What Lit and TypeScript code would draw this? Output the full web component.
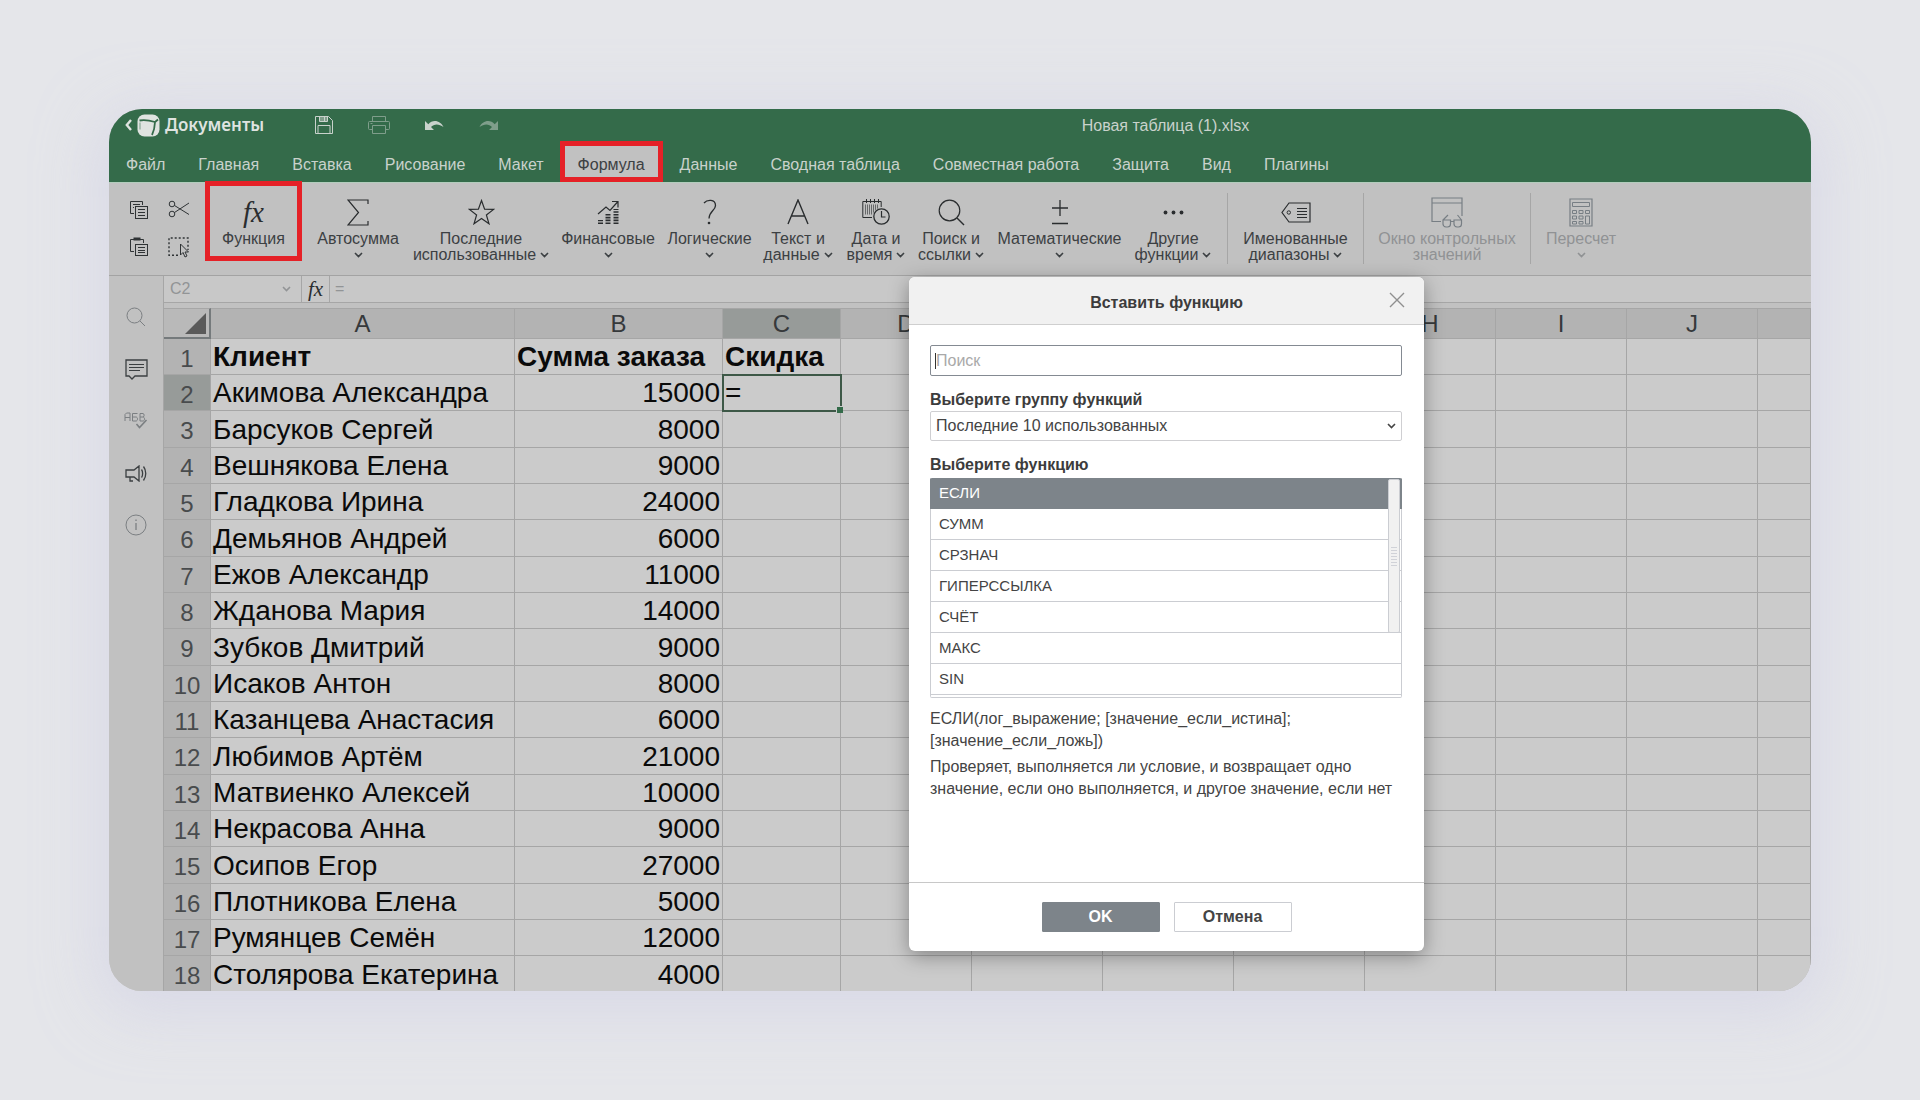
import { LitElement, html, css, svg, nothing } from "lit";
import { customElement } from "lit/decorators.js";
import { classMap } from "lit/directives/class-map.js";

const icon = (w: number, h: number, body: unknown) =>
  html`<svg width=${w} height=${h} viewBox="0 0 ${w} ${h}" fill="none" stroke="currentColor" aria-hidden="true">${body}</svg>`;

const chevron = html`<svg class="chev" width="9" height="6" viewBox="0 0 9 6" fill="none" stroke="currentColor" stroke-width="1.6" aria-hidden="true"><path d="M1 1l3.5 3.5L8 1"/></svg>`;

const icons = {
  back: icon(7, 12, svg`<path stroke-width="2.4" d="M6 1L1.8 6 6 11"/>`),
  logo: icon(23, 23, svg`<rect x=".5" y=".5" width="22" height="22" rx="7" fill="#dfe3e0" stroke="none"/><path stroke="#346b4a" stroke-width="1.800" stroke-linejoin="round" d="M2.500 6.500c5-1.200 10-.2 15.500 1.500-.2 5-1 9-3 13M18 8l3-2.500"/><path stroke="#346b4a" stroke-width="1.200" opacity=".5" d="M3 8.500v7"/>`),
  save: icon(18, 18, svg`<path d="M.5.5h13l4 4v13H.5z"/><path d="M4.500.5v5h8v-5zM9.500 1v4" fill="currentColor" fill-opacity=".5"/><path d="M3 17.500v-8h12v8"/>`),
  print: icon(22, 18, svg`<path d="M4.500 5V.5h13V5M4.500 13.500h-3a1 1 0 0 1-1-1V6.500a1 1 0 0 1 1-1h19a1 1 0 0 1 1 1v6a1 1 0 0 1-1 1h-3M4.500 9.500h13v8h-13zM2.500 7.500h2"/>`),
  undo: icon(19, 11, svg`<path stroke="none" fill="currentColor" d="M0 1v9h9L6 7c3-3.500 8-3.500 12.500 0C16 1 8-1.500 3.300 4.300z"/>`),
  redo: icon(19, 11, svg`<path stroke="none" fill="currentColor" d="M19 1v9h-9l3-3C10 3.500 5 3.500.5 7 3 1 11-1.500 15.700 4.300z"/>`),
  copy: icon(20, 19, svg`<path d="M5 13.500H1.500v-12h12V5M4 4.500h7M4 7.500h1"/><rect x="6.500" y="6.500" width="12" height="12"/><path d="M9 9.500h7M9 12.500h7M9 15.500h7"/>`),
  cut: icon(22, 18, svg`<circle cx="4" cy="4" r="2.800"/><circle cx="4" cy="14" r="2.800"/><path d="M6.500 5.500L21 14.500M6.500 12.500L21 3"/>`),
  paste: icon(20, 20, svg`<path d="M5 14.500H1.500v-12h13V6"/><path stroke-width="3" d="M4.500 2h7"/><rect x="6.500" y="7.500" width="12" height="11"/><path d="M9 10.500h7M9 13.500h7M9 15.500h7"/>`),
  select: icon(22, 21, svg`<path stroke-width="1.400" stroke-dasharray="2 2" d="M10 18.300H1V1h19v12"/><path d="M12.500 7v11l2.500-2.500 2 4.500 2-1-2-4h3.500z"/>`),
  sum: icon(22, 27, svg`<path stroke-width="1.200" d="M21 5V1H1l10.500 12.500L1 26h20v-4"/>`),
  star: icon(27, 27, svg`<path stroke-width="1.200" d="M13.500 1.500l3.100 8.600 9 .3-7.200 5.500 2.600 8.900-7.500-5.200L6 24.800l2.600-8.900L1.400 10.400l9-.3z"/>`),
  finance: icon(22, 25, svg`<path stroke-width="1.200" d="M1 14l8-7 4 3.500L20.500 2M15 1.500h6v6"/><path stroke-width="5" stroke-dasharray="1.600 1.200" d="M3.500 24v-4M11 24V13.500M19 24V9"/>`),
  logic: icon(14, 26, svg`<path stroke-width="1.300" d="M1 4C4 .5 12.500-.3 12.500 6.500c0 5-6.500 6-6.500 13"/><circle cx="6" cy="24" r="1.300" fill="currentColor" stroke="none"/>`),
  text: icon(22, 26, svg`<path stroke-width="1.400" d="M1 25L11 1l10 24M4.500 17h13"/>`),
  date: icon(28, 26, svg`<path d="M10 18.500H.8v-16h18.400V8M4.500 0v4M8.500 0v4M12.500 0v4M16.500 0v4"/><path stroke-width="10" stroke-dasharray="1 1" opacity=".6" d="M3 10.500h14"/><circle cx="19.500" cy="17.500" r="9" fill="#c1c1c1" stroke="none"/><circle cx="19.500" cy="17.500" r="7.700" stroke-width="1.300"/><path stroke-width="1.200" d="M19.500 12v6h4"/>`),
  search: icon(27, 27, svg`<circle cx="11.500" cy="11.500" r="10.300" stroke-width="1.200"/><path stroke-width="1.400" d="M19 19l7 7"/>`),
  math: icon(18, 26, svg`<path stroke-width="1.300" d="M9 1v16M1 9h16M1 24.500h16"/>`),
  more: icon(21, 5, svg`<g stroke="none" fill="currentColor"><circle cx="2.500" cy="2.500" r="1.900"/><circle cx="10.500" cy="2.500" r="1.900"/><circle cx="18.500" cy="2.500" r="1.900"/></g>`),
  names: icon(30, 21, svg`<path stroke-width="1.200" d="M8 1h21v19H8L1 10.500z"/><circle cx="7.800" cy="10.500" r="1.700"/><path d="M16 6.500h10M16 9.500h10M16 12.500h10M16 15.500h10"/>`),
  watch: icon(32, 31, svg`<path stroke-width="1.200" d="M10 24.500H1V1h30v18M1 6h30M12 23v4c0 1 1 3 3 3h1.500c2 0 3-1.500 3-3v-4zM23 23v4c0 1 1 3 3 3h1.500c2 0 3-1.500 3-3v-4zM19.500 24.500H23M12 23l5-5M30.500 23l-4-5"/>`),
  calc: icon(24, 29, svg`<path stroke-width="1.200" d="M1 1h22v27H1z"/><path d="M3.500 4.500h17v4h-17zM3.500 12.500h4v3h-4zM10 12.500h4v3h-4zM16.500 12.500h4v3h-4zM3.500 18h4v3h-4zM10 18h4v3h-4zM3.500 23.500h4v2.500h-4zM10 23.500h4v2.500h-4zM16.500 18h4v8h-4z"/>`),
  find: icon(20, 20, svg`<circle cx="8.500" cy="8.500" r="7.500"/><path d="M14 14l5 5"/>`),
  comment: icon(23, 21, svg`<path stroke-width="1.300" d="M1 1h21v16H10l-3 3-3-3H1z"/><path d="M4 5.500h15M4 8.500h15M4 11.500h11"/>`),
  spell: icon(24, 18, svg`<path d="M1 9V2.500L2.500 1H6v8M1 5.500h5M13.500 1.500h-5V9H12c2 0 2-4 0-4H8.500M16 9V1.500h3c1.500 0 1.500 3.500 0 3.500h-3M19 5c2 0 2 4 0 4h-3"/><path stroke-width="1.600" d="M12.500 12l3 3.500L22.500 8"/>`),
  horn: icon(22, 17, svg`<path stroke-width="1.300" d="M1 5h8l5-4v15l-5-4H1zM5 12v4h3M16.500 4.500c1.500 2 1.500 6 0 8M18.500 1.500c3 4 3 10 0 14"/>`),
  info: icon(22, 22, svg`<circle cx="11" cy="11" r="10"/><path stroke-width="1.300" d="M11 9v7M11 5.500v1.500"/>`),
  close: icon(16, 16, svg`<path stroke-width="1.400" d="M1 1l14 14M15 1L1 15"/>`),
};

const tabs = ["Файл", "Главная", "Вставка", "Рисование", "Макет", "Формула", "Данные", "Сводная таблица", "Совместная работа", "Защита", "Вид", "Плагины"];

interface Tool { icon: unknown; lines: string[]; menu?: boolean; cls?: string; disabled?: boolean; sep?: boolean }
const tools: Tool[] = [
  { icon: html`<span class="fx">fx</span>`, lines: ["Функция"], cls: "marked" },
  { icon: icons.sum, lines: ["Автосумма"], menu: true },
  { icon: icons.star, lines: ["Последние", "использованные"], menu: true },
  { icon: icons.finance, lines: ["Финансовые"], menu: true },
  { icon: icons.logic, lines: ["Логические"], menu: true },
  { icon: icons.text, lines: ["Текст и", "данные"], menu: true },
  { icon: icons.date, lines: ["Дата и", "время"], menu: true },
  { icon: icons.search, lines: ["Поиск и", "ссылки"], menu: true },
  { icon: icons.math, lines: ["Математические"], menu: true },
  { icon: icons.more, lines: ["Другие", "функции"], menu: true },
  { icon: icons.names, lines: ["Именованные", "диапазоны"], menu: true, sep: true },
  { icon: icons.watch, lines: ["Окно контрольных", "значений"], disabled: true, sep: true },
  { icon: icons.calc, lines: ["Пересчет"], menu: true, disabled: true, sep: true },
];

const columns = ["A", "B", "C", "D", "E", "F", "G", "H", "I", "J", ""];
const rows: [string, string, string][] = [
  ["Клиент", "Сумма заказа", "Скидка"],
  ["Акимова Александра", "15000", "="],
  ["Барсуков Сергей", "8000", ""],
  ["Вешнякова Елена", "9000", ""],
  ["Гладкова Ирина", "24000", ""],
  ["Демьянов Андрей", "6000", ""],
  ["Ежов Александр", "11000", ""],
  ["Жданова Мария", "14000", ""],
  ["Зубков Дмитрий", "9000", ""],
  ["Исаков Антон", "8000", ""],
  ["Казанцева Анастасия", "6000", ""],
  ["Любимов Артём", "21000", ""],
  ["Матвиенко Алексей", "10000", ""],
  ["Некрасова Анна", "9000", ""],
  ["Осипов Егор", "27000", ""],
  ["Плотникова Елена", "5000", ""],
  ["Румянцев Семён", "12000", ""],
  ["Столярова Екатерина", "4000", ""],
];
const functions = ["ЕСЛИ", "СУММ", "СРЗНАЧ", "ГИПЕРССЫЛКА", "СЧЁТ", "МАКС", "SIN"];

const base = css`
  * { box-sizing: border-box; }
  button, input, select { font: inherit; color: inherit; margin: 0; padding: 0; border: 0; background: none; border-radius: 0; }
  svg { display: block; flex: none; }
`;

@customElement("app-header")
export class AppHeader extends LitElement {
  static styles = [base, css`
    :host { display: block; background: #346b4a; color: #c9d2cc; font-size: 16px; }
    .top { display: grid; grid-template-columns: 192px auto 1fr; height: 32px; align-items: center; }
    .brand { display: flex; align-items: center; gap: 5px; padding-left: 16px; color: #dfe3e0; text-decoration: none; }
    .name { font: 600 17px/22px "Noto Sans", "Open Sans", sans-serif; }
    .quick { display: flex; align-items: center; gap: 35px; padding-left: 14px; }
    .quick .dim { opacity: .5; }
    .title { text-align: center; padding: 2px 0 0 22px; }
    .tabs { display: flex; gap: 1px; height: 41px; align-items: stretch; }
    .tab { padding: 6px 16px 0; line-height: 20px; white-space: nowrap; display: flex; align-items: center; }
    .tab:first-child { padding-left: 17px; }
    .tab.active { background: #c1c1c1; color: #3c4043; border: 5px solid #e52127; padding: 6px 13px 0; margin-left: -1px; }
  `];
  render() {
    return html`
      <div class="top">
        <a class="brand" href="#">${icons.back}${icons.logo}<span class="name">Документы</span></a>
        <div class="quick">
          <button aria-label="Сохранить">${icons.save}</button>
          <button class="dim" aria-label="Печать">${icons.print}</button>
          <button aria-label="Отменить">${icons.undo}</button>
          <button class="dim" aria-label="Повторить">${icons.redo}</button>
        </div>
        <span class="title">Новая таблица (1).xlsx</span>
      </div>
      <nav class="tabs">
        ${tabs.map((t) => html`<button class=${classMap({ tab: true, active: t === "Формула" })}>${t}</button>`)}
      </nav>`;
  }
}

@customElement("app-toolbar")
export class AppToolbar extends LitElement {
  static styles = [base, css`
    :host { display: block; background: #c1c1c1; border-top: 1px solid #b3cdbd; border-bottom: 1px solid #a3a3a3; color: #3c4043; font-size: 16px; }
    .bar { display: grid; height: 92px; grid-template-columns: 96px 97px 112px 134px 120px 83px 94px 62px 88px 129px 98px 5px 1px 135px 1px 166px 1px 100px; }
    .clip { display: grid; grid-template-columns: 22px 22px; gap: 18px 18px; align-content: start; justify-content: center; padding: 16px 0 0 4px; color: #2f3335; }
    .clip button { height: 20px; display: grid; place-items: center; }
    .tool { display: flex; flex-direction: column; align-items: center; white-space: nowrap; padding-top: 13px; }
    .tool.marked { border: 5px solid #e52127; margin: -2px 0 14px; padding-top: 10px; }
    .pic { height: 32px; margin-bottom: 3px; display: grid; place-items: center; color: #2a2d2f; }
    .line { display: flex; align-items: center; gap: 4px; line-height: 16px; height: 16px; }
    .tool:disabled { color: #909294; }
    .tool:disabled .pic { color: #777e84; }
    .fx { font: italic 29px/32px "Liberation Serif", serif; }
    .sep { background: #a6a6a6; height: 71px; margin-top: 10px; }
    .sep.first { grid-column: 13; }
  `];
  render() {
    let first = true;
    return html`<div class="bar">
      <div class="clip">
        <button aria-label="Копировать">${icons.copy}</button>
        <button aria-label="Вырезать">${icons.cut}</button>
        <button aria-label="Вставить">${icons.paste}</button>
        <button aria-label="Выделить">${icons.select}</button>
      </div>
      ${tools.map((t) => {
        const isFirst = !!t.sep && first;
        if (t.sep) first = false;
        const last = t.lines.length - 1;
        return html`
          ${t.sep ? html`<div class=${classMap({ sep: true, first: isFirst })}></div>` : nothing}
          <button class="tool ${t.cls ?? ""}" ?disabled=${t.disabled}>
            <span class="pic">${t.icon}</span>
            ${t.lines.map((l, i) => html`<span class="line">${l}${t.menu && last > 0 && i === last ? chevron : nothing}</span>`)}
            ${t.menu && last === 0 ? html`<span class="line">${chevron}</span>` : nothing}
          </button>`;
      })}
    </div>`;
  }
}

@customElement("app-sheet")
export class AppSheet extends LitElement {
  static styles = [base, css`
    :host { display: flex; flex: 1; min-height: 0; background: #c1c1c1; }
    .side { width: 55px; flex: none; border-right: 1px solid #a6a6a6; display: flex; flex-direction: column; align-items: center; padding-top: 25px; gap: 20px; color: #7b7f82; }
    .side button { width: 32px; height: 32px; display: grid; place-items: center; }
    .side .dark { color: #3b3f41; }
    .main { flex: 1; min-width: 0; overflow: hidden; }
    .formula { display: flex; height: 27px; border-bottom: 1px solid #a6a6a6; margin-bottom: 5px; background: #c8c8c8; color: #929496; font-size: 16px; }
    .cell { width: 137px; display: flex; align-items: center; padding: 0 10px 0 6px; }
    .cell input { width: 100%; min-width: 0; }
    .fx { width: 29px; border: solid #a6a6a6; border-width: 0 1px; font: italic 21px/24px "Liberation Serif", serif; color: #2a2d2f; }
    .expr { flex: 1; padding-left: 5px; }
    table { table-layout: fixed; width: 100%; border-collapse: separate; border-spacing: 0; color: #0a0a0a; font-size: 28px; }
    .n { width: 47px; } .a { width: 304px; } .b { width: 208px; } .c { width: 118px; } .d { width: 131px; }
    th, td { padding: 0; border-right: 1px solid #a6a6a6; border-bottom: 1px solid #a6a6a6; white-space: nowrap; }
    thead th { height: 31px; background: #b3b3b3; border-top: 1px solid #a6a6a6; font-weight: 400; font-size: 24px; line-height: 27px; color: #36393b; }
    tbody tr { height: 36px; }
    tbody tr:nth-child(3n) { height: 37px; }
    tbody th { background: #b3b3b3; font-weight: 400; font-size: 24px; line-height: 27px; padding-top: 3px; color: #484b4d; }
    td { background: #cbcbcb; line-height: 32px; padding: 1px 2px 0; }
    tbody tr:first-child td { font-weight: 700; }
    .num { text-align: right; }
    thead th.sel, tbody th.sel { background: #979b99; }
    thead th.corner { border-right: 2px solid #757a7c; border-bottom: 2px solid #757a7c; background: #b9b9b9; }
    .tri { margin: 0 3px 0 auto; color: #5a5a5a; }
    .active { position: relative; outline: 2px solid #3d5847; outline-offset: -1px; }
    .active::after { content: ""; position: absolute; right: -3px; bottom: -3px; width: 6px; height: 6px; background: #346b4a; border: solid #cbcbcb; border-width: 1px 0 0 1px; }
  `];
  render() {
    return html`
      <div class="side">
        <button aria-label="Поиск">${icons.find}</button>
        <button class="dark" aria-label="Комментарии">${icons.comment}</button>
        <button aria-label="Проверка орфографии">${icons.spell}</button>
        <button class="dark" aria-label="Обратная связь">${icons.horn}</button>
        <button aria-label="О программе">${icons.info}</button>
      </div>
      <div class="main">
        <div class="formula">
          <div class="cell"><input aria-label="Имя ячейки" .value=${"C2"} />${chevron}</div>
          <button class="fx" aria-label="Вставить функцию">fx</button>
          <input class="expr" aria-label="Формула" .value=${"="} />
        </div>
        <table>
          <colgroup><col class="n"><col class="a"><col class="b"><col class="c">${columns.slice(3, 10).map(() => html`<col class="d">`)}<col></colgroup>
          <thead><tr>
            <th class="corner"><svg class="tri" width="21" height="21" viewBox="0 0 21 21"><path d="M21 0v21H0z" fill="currentColor"/></svg></th>
            ${columns.map((c) => html`<th class=${c === "C" ? "sel" : ""}>${c}</th>`)}
          </tr></thead>
          <tbody>
            ${rows.map((r, i) => html`<tr>
              <th class=${i === 1 ? "sel" : ""}>${i + 1}</th>
              <td>${r[0]}</td>
              <td class=${i ? "num" : ""}>${r[1]}</td>
              <td class=${i === 1 ? "active" : ""}>${r[2]}</td>
              ${columns.slice(3).map(() => html`<td></td>`)}
            </tr>`)}
          </tbody>
        </table>
      </div>`;
  }
}

@customElement("function-dialog")
export class FunctionDialog extends LitElement {
  static styles = [base, css`
    :host { display: block; width: 515px; background: #fff; border-radius: 6px; box-shadow: 0 5px 20px rgba(0, 0, 0, .35); color: #444; font-size: 16px; overflow: hidden; }
    header { position: relative; height: 48px; background: #f1f1f1; border-bottom: 1px solid #cfcfcf; display: grid; place-items: center; font-weight: 700; color: #3c3c3c; }
    h2 { margin: 5px 0 0; font-size: 16px; line-height: 20px; }
    .x { position: absolute; right: 19px; top: 15px; color: #8f8f8f; }
    .body { padding: 20px 22px 0 21px; height: 557px; display: flex; flex-direction: column; }
    .search { position: relative; display: flex; }
    .search input { width: 100%; height: 31px; border: 1px solid #848a92; border-radius: 2px; padding: 0 5px; }
    .search input::placeholder { color: #a9a9a9; opacity: 1; }
    .caret { position: absolute; left: 5px; top: 8px; width: 1px; height: 16px; background: #333; }
    label, .label { font-weight: 700; line-height: 18px; color: #3c3c3c; }
    label { margin-top: 15px; margin-bottom: 2px; }
    .label { margin-top: 15px; margin-bottom: 4px; }
    .select { display: grid; align-items: center; }
    .select select { grid-area: 1 / 1; width: 100%; height: 30px; appearance: none; border: 1px solid #cfcfd2; border-radius: 2px; padding: 0 5px 2px; }
    .select svg { grid-area: 1 / 1; justify-self: end; margin-right: 6px; }
    .list { position: relative; height: 220px; overflow: hidden; border-bottom: 1px solid #cbcdd2; border-radius: 2px; font-size: 15px; }
    ul { list-style: none; margin: 0; padding: 0; }
    li { height: 31px; line-height: 29px; padding-left: 8px; border: solid #cbcdd2; border-width: 0 1px 1px; }
    li.on { background: #7d848a; border-color: #7d848a; color: #fff; }
    li.rest { height: 4px; }
    .thumb { position: absolute; right: 2px; top: 1px; width: 12px; height: 154px; background: #f1f1f1; border: 1px solid #cbcdd2; border-radius: 2px; display: grid; place-items: center; }
    .grip { width: 6px; height: 19px; background: repeating-linear-gradient(#d0d2d8 0 1px, transparent 1px 3px); }
    p { margin: 10px 0 0; line-height: 22px; white-space: nowrap; }
    p + p { margin-top: 4px; }
    footer { border-top: 1px solid #c8c8c8; display: flex; justify-content: center; gap: 14px; padding: 19px 0; }
    footer button { width: 118px; height: 30px; font-weight: 700; border: 1px solid #cbcdd2; border-radius: 1px; }
    footer .ok { background: #7d848a; border-color: #7d848a; color: #fff; }
  `];
  render() {
    return html`
      <header><h2>Вставить функцию</h2><button class="x" aria-label="Закрыть">${icons.close}</button></header>
      <div class="body">
        <div class="search"><input type="text" placeholder="Поиск" aria-label="Поиск" /><span class="caret"></span></div>
        <label for="group">Выберите группу функций</label>
        <div class="select"><select id="group"><option>Последние 10 использованных</option></select>${chevron}</div>
        <div class="label" id="fn">Выберите функцию</div>
        <div class="list">
          <ul role="listbox" aria-labelledby="fn">
            ${functions.map((f, i) => html`<li role="option" class=${i ? "" : "on"} aria-selected=${i ? "false" : "true"}>${f}</li>`)}
            <li class="rest" role="presentation"></li>
          </ul>
          <div class="thumb"><div class="grip"></div></div>
        </div>
        <p>ЕСЛИ(лог_выражение; [значение_если_истина];<br>[значение_если_ложь])</p>
        <p>Проверяет, выполняется ли условие, и возвращает одно<br>значение, если оно выполняется, и другое значение, если нет</p>
      </div>
      <footer><button class="ok">OK</button><button>Отмена</button></footer>`;
  }
}

@customElement("app-root")
export class AppRoot extends LitElement {
  static styles = [base, css`
    :host { display: block; font-family: "Liberation Sans", Arial, sans-serif; background: #e5e6ea; }
    .page { display: flex; height: 100vh; min-height: 1000px; padding: 109px; overflow: hidden; }
    .window { position: relative; flex: 1; min-width: 0; display: flex; flex-direction: column; border-radius: 33px; overflow: hidden; background: #c1c1c1; }
    .shade { display: flex; flex: 1; min-width: 0; border-radius: 33px; box-shadow: 0 12px 60px 10px rgba(208, 208, 228, .6); }
    function-dialog { position: absolute; left: calc(50% - 51px); top: 168px; }
  `];
  render() {
    return html`<div class="page"><div class="shade"><div class="window">
      <app-header></app-header>
      <app-toolbar></app-toolbar>
      <app-sheet></app-sheet>
      <function-dialog></function-dialog>
    </div></div></div>`;
  }
}
